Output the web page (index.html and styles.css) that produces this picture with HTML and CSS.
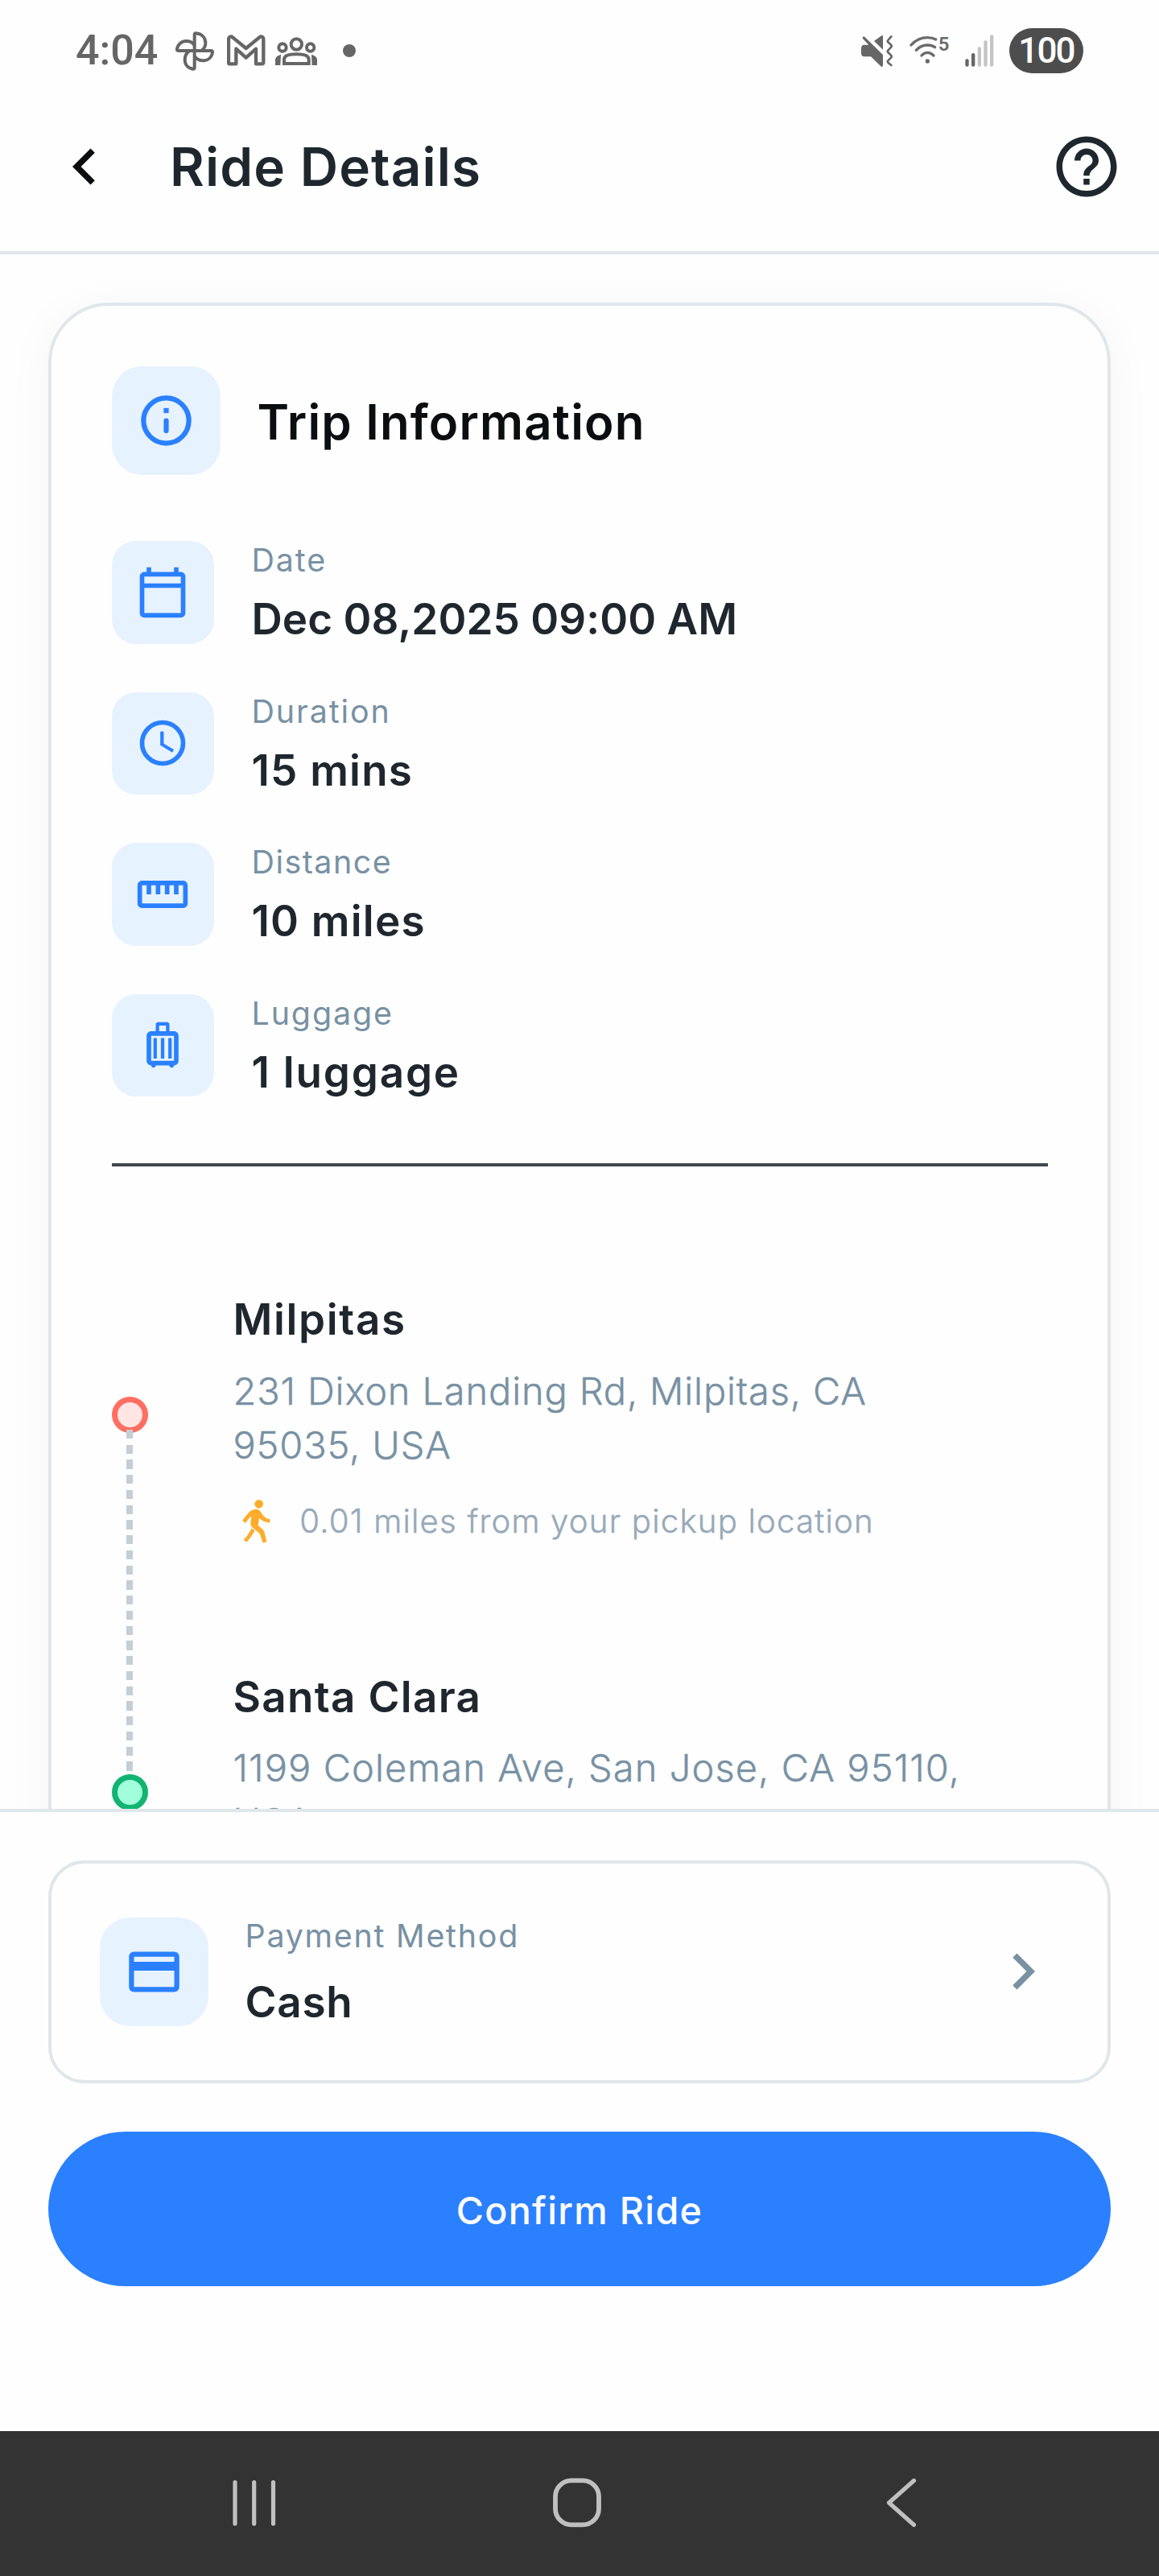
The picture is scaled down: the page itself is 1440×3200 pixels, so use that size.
FILE: index.html
```html
<!DOCTYPE html>
<html lang="en">
<head>
<meta charset="utf-8">
<title>Ride Details</title>
<link rel="stylesheet" href="styles.css">
</head>
<body>
<div class="screen">
  <div class="status">
    <div class="status-left">
      <span class="time">4:04</span>
      <svg class="pinwheel" width="48" height="56" viewBox="475 105 144 168" fill="none" stroke="#666" stroke-width="12" stroke-linejoin="round"><path d="M546 189V128q0-5 5-4c22 2 36 16 36 36 0 13-6 22-14 28"/><path d="M546 189H486q-7 0-5-7c3-17 17-29 35-29 14 0 25 7 30 17"/><path d="M546 189h62q6 0 5 6c-3 19-17 31-35 31-14 0-24-6-32-16"/><path d="M546 189v63q0 6-6 5c-19-3-30-17-30-34 0-15 7-27 18-34"/></svg>
      <svg class="mail" width="48" height="56" viewBox="665 105 144 168" fill="none" stroke="#666" stroke-width="13" stroke-linejoin="round"><path d="M671 232V147c0-11 9-13 15-8l50 41 50-41c6-5 15-3 15 8v85q0 6-6 6h-22v-56l-37 33-37-33v56h-23q-5 0-5-6z"/></svg>
      <svg class="group" width="52" height="56" viewBox="846 105 156 168" fill="none" stroke="#666" stroke-width="12"><circle cx="925" cy="165" r="20"/><circle cx="873" cy="177" r="14"/><circle cx="977" cy="177" r="14"/><path d="M879 237V221c0-13 19-19 46-19s46 6 46 19v16z"/><path fill="#666" stroke="none" d="M846 243V222q1-13 21-19l-2 40zM1002 243V222q-1-13-21-19l2 40z"/></svg>
      <span class="dot"></span>
    </div>
    <div class="status-right">
      <svg width="39" height="56" viewBox="150 105 117 168"><g fill="#666"><path d="M150 180q0-13 12-13h16L156 144q-3-8 5-8L231 204v40q-2 8-8 3L186 211H162q-12 0-12-12z"/><path d="M198 153l28-20q5-3 5 2v50z"/></g><path fill="none" stroke="#666" stroke-width="8" stroke-linecap="round" stroke-linejoin="round" d="M262 136l-12 14q-3 4 0 7l11 10q4 5 0 9l-11 12q-3 4 0 7l11 11q4 5 0 9l-11 11q-3 4 0 7l12 10"/></svg>
      <svg class="wifi" width="49" height="56" viewBox="330 105 147 168" fill="none" stroke="#6b6b6b" stroke-width="10" stroke-linecap="round"><path d="M336 168q25-28 61-28 18 0 31 7"/><path d="M355 187q17-19 42-19 17 0 28 8"/><path d="M375 207q10-11 22-11t23 11"/><circle cx="397" cy="228" r="8" fill="#6b6b6b" stroke="none"/><text x="437" y="190" class="band">5</text></svg>
      <svg class="signal" width="36" height="56" viewBox="536 105 108 168"><g fill="#666"><rect x="537" y="220" width="13" height="28" rx="6"/><rect x="560" y="198" width="13" height="50" rx="6"/></g><g fill="#c4c4c4"><rect x="583" y="175" width="13" height="73" rx="6"/><rect x="606" y="151" width="13" height="97" rx="6"/><rect x="629" y="130" width="13" height="118" rx="6"/></g></svg>
      <span class="battery">100</span>
    </div>
  </div>

  <header class="header">
    <svg width="90" height="90" viewBox="0 0 24 24" fill="#0a0e11"><path d="M15.41 7.41 14 6l-6 6 6 6 1.41-1.41L10.83 12z"/></svg>
    <h1>Ride Details</h1>
    <svg width="90" height="90" viewBox="0 0 24 24" fill="#1f272e"><path d="M11 18h2v-2h-2v2zm1-16C6.48 2 2 6.48 2 12s4.48 10 10 10 10-4.48 10-10S17.52 2 12 2zm0 18c-4.41 0-8-3.59-8-8s3.59-8 8-8 8 3.59 8 8-3.59 8-8 8zm0-14c-2.21 0-4 1.79-4 4h2c0-1.1.9-2 2-2s2 .9 2 2c0 2-3 1.75-3 5h2c0-2.25 3-2.5 3-5 0-2.21-1.79-4-4-4z"/></svg>
  </header>

  <main class="content">
    <section class="card">
      <div class="card-head">
        <div class="tile tile-lg"><svg width="75" height="75" viewBox="0 0 24 24" fill="#2a80ff"><circle cx="12" cy="12" r="9" fill="none" stroke="#2a80ff" stroke-width="2"/><rect x="11" y="11" width="2" height="6" rx="1"/><rect x="11" y="7" width="2" height="2"/></svg></div>
        <h2>Trip Information</h2>
      </div>
      <div class="details">
        <div class="row">
          <div class="tile"><svg width="68" height="68" viewBox="0 0 24 24" fill="#2a80ff"><path d="M20 3h-1V1h-2v2H7V1H5v2H4c-1.1 0-2 .9-2 2v16c0 1.1.9 2 2 2h16c1.1 0 2-.9 2-2V5c0-1.1-.9-2-2-2zm0 2v3H4V5h16zM4 21V10h16v11H4z"/></svg></div>
          <div class="text"><div class="label">Date</div><div class="value date">Dec 08,2025 09:00 AM</div></div>
        </div>
        <div class="row">
          <div class="tile"><svg width="68" height="68" viewBox="0 0 24 24" fill="#2a80ff"><circle cx="12" cy="12" r="9" fill="none" stroke="#2a80ff" stroke-width="2"/><path d="M12.5 7H11v6l5.25 3.15.75-1.23-4.5-2.67z"/></svg></div>
          <div class="text"><div class="label">Duration</div><div class="value">15 mins</div></div>
        </div>
        <div class="row">
          <div class="tile"><svg width="68" height="68" viewBox="0 0 24 24" fill="#2a80ff"><path d="M21 6H3c-1.1 0-2 .9-2 2v8c0 1.1.9 2 2 2h18c1.1 0 2-.9 2-2V8c0-1.1-.9-2-2-2zm0 10H3V8h2v4h2V8h2v4h2V8h2v4h2V8h2v4h2V8h2v8z"/></svg></div>
          <div class="text"><div class="label distance">Distance</div><div class="value">10 miles</div></div>
        </div>
        <div class="row">
          <div class="tile"><svg width="68" height="68" viewBox="0 0 24 24" fill="#2a80ff"><path d="M17 6h-2V3c0-.55-.45-1-1-1h-4c-.55 0-1 .45-1 1v3H7c-1.1 0-2 .9-2 2v11c0 1.1.9 2 2 2 0 .55.45 1 1 1s1-.45 1-1h6c0 .55.45 1 1 1s1-.45 1-1c1.1 0 2-.9 2-2V8c0-1.1-.9-2-2-2zM10.5 3.5h3V6h-3V3.5zM17 19H7V8h10v11z"/><path d="M8 9h1.5v9H8zM11.25 9h1.5v9h-1.5zM14.5 9H16v9h-1.5z"/></svg></div>
          <div class="text"><div class="label">Luggage</div><div class="value luggage">1 luggage</div></div>
        </div>
      </div>
      <div class="divider"></div>
      <div class="route">
        <div class="rail">
          <span class="stop-dot pickup"></span>
          <span class="dashes"></span>
          <span class="stop-dot dropoff"></span>
        </div>
        <div class="stops">
          <div class="stop">
            <h3>Milpitas</h3>
            <p class="address">231 Dixon Landing Rd, Milpitas, CA<br>95035, USA</p>
            <div class="walk">
              <svg width="36.7" height="56" viewBox="63 58 110 168" fill="#ffab2b"><circle cx="128" cy="77" r="16"/><path d="M66 138 92 107Q103 96 119 96Q130 97 136 108Q147 130 169 134V147Q146 145 129 130L125 157 142 171Q147 176 149 184L157 218 143 222 131 187 103 164Q96 158 97 149L100 123 93 128 78 148Z"/><path d="M101 167 112 177 105 189Q97 203 82 219L71 210Q86 196 93 182Z"/></svg>
              <span>0.01 miles from your pickup location</span>
            </div>
          </div>
          <div class="stop">
            <h3 class="wide">Santa Clara</h3>
            <p class="address wide">1199 Coleman Ave, San Jose, CA 95110,<br>USA</p>
          </div>
        </div>
      </div>
    </section>
  </main>

  <footer class="footer">
    <div class="payment">
      <div class="tile tile-lg"><svg width="75" height="75" viewBox="0 0 24 24" fill="#2a80ff"><path d="M20 4H4c-1.11 0-1.99.89-1.99 2L2 18c0 1.11.89 2 2 2h16c1.11 0 2-.89 2-2V6c0-1.11-.89-2-2-2zm0 14H4v-6.5h16V18zm0-10H4V6h16v2z"/></svg></div>
      <div class="text"><div class="label">Payment Method</div><div class="value">Cash</div></div>
      <svg class="chevron" width="90" height="90" viewBox="0 0 24 24" fill="#7891a3"><path d="M10 6 8.59 7.41 13.17 12l-4.58 4.59L10 18l6-6z"/></svg>
    </div>
    <button class="confirm">Confirm Ride</button>
  </footer>

  <nav class="navbar">
    <svg width="56" height="64" viewBox="0 0 56 64" stroke="#c0c0c0" stroke-width="5.2" stroke-linecap="round"><path d="M4 6.500v51.500M27.700 6.500v51.500M51.500 6.500v51.500"/></svg>
    <svg class="home" width="62" height="64" viewBox="0 0 62 64" fill="none" stroke="#c0c0c0" stroke-width="5.8"><rect x="4" y="4.4" width="54" height="55" rx="20"/></svg>
    <svg width="40" height="64" viewBox="0 0 40 64" fill="none" stroke="#c0c0c0" stroke-width="5.2" stroke-linecap="round" stroke-linejoin="round"><path d="M35.500 4.500 4.500 32l31 27.500"/></svg>
  </nav>
</div>
</body>
</html>
```
FILE: styles.css
```css
* { box-sizing: border-box; }

body {
  margin: 0;
  background: #fefefe;
  font-family: Inter, "Liberation Sans", sans-serif;
  color: #1f272e;
}

h1, h2, h3, p { margin: 0; font-weight: 600; }

svg { display: block; flex: none; }

.screen {
  width: 1440px;
  height: 3200px;
  display: flex;
  flex-direction: column;
  overflow: hidden;
}

/* Status bar */
.status {
  flex: none;
  height: 102px;
  padding: 35px 94px 0 94px;
  display: flex;
  justify-content: space-between;
  align-items: flex-start;
}

.status-left, .status-right { display: flex; align-items: center; height: 56px; }

.time {
  width: 124px;
  font: 500 52px/56px Roboto, sans-serif;
  letter-spacing: 0;
  color: #666;
}

.mail { margin-left: 16px; }
.group { margin-left: 12px; }
.dot { width: 16px; height: 16px; margin-left: 32px; border-radius: 50%; background: #666; }

.wifi { margin-left: 21px; }
.band { font: 600 72px Roboto, sans-serif; fill: #6b6b6b; stroke: none; }
.signal { margin-left: 20px; }

.battery {
  width: 92px;
  height: 56px;
  margin-left: 19px;
  border-radius: 28px;
  background: #4d4d4d;
  color: #fefefe;
  font: 500 44px/56px Roboto, sans-serif;
  letter-spacing: -1.8px;
  text-align: center;
}

/* Header */
.header {
  flex: none;
  height: 214px;
  padding: 0 45px 0 60px;
  border-bottom: 4px solid #e0e7ea;
  display: flex;
  align-items: center;
}

.header h1 {
  flex: 1;
  margin-left: 61px;
  font-size: 65.6px;
  line-height: 80px;
  letter-spacing: 1.1px;
}

/* Scrolling content */
.content {
  flex: 1;
  min-height: 0;
  padding: 60px 60px 0;
  overflow: hidden;
}

.card {
  height: 2400px;
  padding: 74.5px;
  border: 4px solid #e0e7ea;
  border-radius: 75px;
  background: #fefefe;
  box-shadow: 0 8px 60px rgba(0, 0, 0, 0.045);
}

.card-head { display: flex; gap: 46px; align-items: center; }
.card-head h2 {
  padding-top: 4px;
  color: #0a0e11;
  font-size: 60px;
  line-height: 80px;
  letter-spacing: 1.15px;
}

.tile {
  flex: none;
  width: 127.5px;
  height: 127.5px;
  border-radius: 30px;
  background: #e7f2ff;
  display: flex;
  align-items: center;
  justify-content: center;
}
.tile-lg { width: 135px; height: 135px; border-radius: 37.5px; }

.details { margin-top: 82.5px; display: flex; flex-direction: column; gap: 60px; }
.row { display: flex; gap: 46.5px; height: 127.5px; }

.label {
  padding-top: 1px;
  font-size: 39.4px;
  line-height: 46.8px;
  letter-spacing: 1.9px;
  color: #7891a3;
}
.label.distance { letter-spacing: 1.5px; }
.value {
  margin-top: 19.3px;
  font-size: 53px;
  font-weight: 600;
  line-height: 60px;
  letter-spacing: 1.2px;
}
.value.date { letter-spacing: 0.05px; }
.value.luggage { letter-spacing: 1.8px; }

.divider { height: 4px; margin-top: 82.5px; background: #42474d; }

/* Route */
.route { display: flex; padding-top: 157.2px; }

.rail { width: 45px; margin-top: 129.5px; display: flex; flex-direction: column; align-items: center; }
.stop-dot { width: 45px; height: 45px; flex: none; border-radius: 50%; border: 7.5px solid; }
.pickup { border-color: #fe6f61; background: #ffe5e4; }
.dropoff { border-color: #12b373; background: #a2ffdb; }
.dashes {
  width: 8px;
  height: 428px;
  margin-top: -4px;
  z-index: 1;
  background: repeating-linear-gradient(#c3ced6 0 11.25px, transparent 11.25px 18.75px);
}

.stops { margin-left: 106px; }
.stop { height: 469px; }
.stop h3 { font-size: 53px; line-height: 66px; letter-spacing: 1.65px; }
.stop h3.wide { letter-spacing: 1.3px; }
.address {
  margin-top: 22.7px;
  font-size: 47px;
  font-weight: 300;
  line-height: 67px;
  letter-spacing: 0.85px;
  color: #7891a3;
  -webkit-text-stroke: 0.4px;
}
.address.wide { margin-top: 21.5px; letter-spacing: 1.08px; }
.walk {
  margin: 31.5px 0 0 10px;
  display: flex;
  align-items: center;
  gap: 36px;
  color: #97a9b8;
  font-size: 40.2px;
  font-weight: 300;
  line-height: 60px;
  letter-spacing: 1.18px;
  -webkit-text-stroke: 0.4px;
}

/* Payment and confirm */
.footer {
  flex: none;
  height: 773px;
  padding: 59.5px 60px 0;
  border-top: 4px solid #e0e7ea;
}

.payment {
  height: 277.5px;
  padding: 0 60px;
  border: 4px solid #e0e7ea;
  border-radius: 45px;
  display: flex;
  align-items: center;
  gap: 45.5px;
}
.payment .text { padding-top: 1.5px; }
.payment .label { line-height: 46px; letter-spacing: 1.75px; }
.payment .value { margin-top: 26.7px; line-height: 64px; letter-spacing: 0.7px; }
.chevron { margin-left: auto; }

.confirm {
  display: block;
  width: 100%;
  height: 192px;
  margin-top: 60px;
  padding: 3px 0 0;
  border: 0;
  border-radius: 96px;
  background: #2a80ff;
  color: #fefefe;
  font: 500 46.7px/60px Inter, "Liberation Sans", sans-serif;
  letter-spacing: 1.3px;
}

/* System navigation */
.navbar {
  flex: none;
  height: 180px;
  padding: 0 300px 3px 288px;
  background: #333;
  display: flex;
  align-items: center;
}
.home { margin: 0 auto 0 342px; }
```
